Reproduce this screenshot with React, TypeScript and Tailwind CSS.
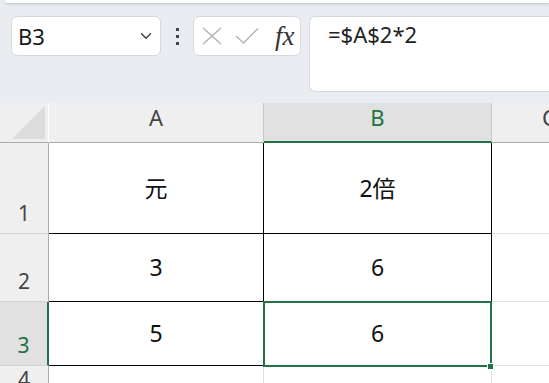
import React from 'react';
import { ChevronDown } from 'lucide-react';

const GREEN = '#217346';

// ── column header cell ──
function ColHeader({ label, active }: { label: string; active?: boolean }) {
  return (
    <div
      className={`flex items-start justify-center pt-[1px] text-[22px] leading-[26px] border-r border-r-[#c8c8c8] ${
        active ? 'bg-[#e1e1e1] text-[#217346] border-b-2 border-b-[#217346]' : 'bg-[#efefef] text-[#444] border-b border-b-[#ababab]'
      }`}
    >
      {label}
    </div>
  );
}

// ── row header cell ──
function RowHeader({ label, active }: { label: string; active?: boolean }) {
  return (
    <div
      className={`flex items-end justify-center pb-[6px] text-[21px] leading-[28px] border-b border-b-[#d4d4d4] ${
        active ? 'bg-[#e1e1e1] text-[#217346] border-r-2 border-r-[#217346]' : 'bg-[#efefef] text-[#444] border-r border-r-[#ababab]'
      }`}
    >
      {label}
    </div>
  );
}

function Cell({ value, last }: { value?: string; last?: boolean }) {
  return (
    <div
      className={`flex items-center justify-center text-[23px] text-[#111] border-b border-r ${
        last ? 'border-[#e1e1e1]' : 'border-black'
      }`}
    >
      {value}
    </div>
  );
}

export default function App() {
  const rows = [
    { n: '1', a: '元', b: '2倍' },
    { n: '2', a: '3', b: '6' },
    { n: '3', a: '5', b: '6' },
  ];

  return (
    <div
      className="w-[549px] h-[383px] overflow-hidden bg-[#e9ecf0] flex flex-col"
      style={{ fontFamily: '"Noto Sans", "Noto Sans CJK JP", sans-serif' }}
    >
      {/* ribbon edge */}
      <div className="shrink-0 h-[3px] ml-[5px] bg-white rounded-bl-[6px] shadow-[0_1px_3px_rgba(0,0,0,0.2)]" />

      {/* ── formula bar ── */}
      <div className="shrink-0 flex items-start h-[100px] pt-[13px] pl-[11px]">
        <div className="w-[150px] h-[40px] bg-white rounded-[6px] border border-[#d6d8dc] flex items-center justify-between pl-[6px] pr-[5px]">
          <span className="text-[22px] text-[#1a1a1a] leading-none">B3</span>
          <ChevronDown size={18} strokeWidth={1.6} className="text-[#333]" />
        </div>
        <div className="w-[32px] h-[40px] flex flex-col items-center justify-center gap-[4px]">
          <span className="w-[3px] h-[3px] bg-[#444]" />
          <span className="w-[3px] h-[3px] bg-[#444]" />
          <span className="w-[3px] h-[3px] bg-[#444]" />
        </div>
        <div className="w-[108px] h-[40px] bg-white rounded-[6px] border border-[#d6d8dc] flex items-center pl-[8px]">
          <svg width="20" height="18" viewBox="0 0 20 18" fill="none" stroke="#b4b4b4" strokeWidth="1.5">
            <path d="M1 1 L19 17 M19 1 L1 17" />
          </svg>
          <svg width="24" height="18" viewBox="0 0 24 18" fill="none" stroke="#b4b4b4" strokeWidth="1.5" className="ml-[13px]">
            <path d="M1 9 L8.5 16 L23 1.5" />
          </svg>
          <span
            className="ml-[16px] text-[27px] italic text-[#333] leading-none"
            style={{ fontFamily: '"Liberation Serif", serif' }}
          >
            fx
          </span>
        </div>
        <div className="ml-[8px] flex-1 h-[76px] bg-white rounded-l-[6px] border border-r-0 border-[#d6d8dc] pl-[18px] pt-[1px]">
          <span className="text-[22px] text-[#222]">=$A$2*2</span>
        </div>
      </div>

      {/* ── sheet grid ── */}
      <div className="relative flex-1 min-h-0 overflow-hidden grid grid-cols-[49px_215px_228px_1fr] grid-rows-[40px_91px_68px_64px_34px] bg-white">
        <div className="bg-[#efefef] border-r border-r-white border-b border-b-[#ababab] flex items-end pl-[12px] pb-[2px]">
          <svg width="34" height="34" viewBox="0 0 34 34">
            <polygon points="0,33 33,33 33,0" fill="#dcdcdc" />
          </svg>
        </div>
        <ColHeader label="A" />
        <ColHeader label="B" active />
        <div className="bg-[#efefef] border-b border-b-[#ababab] text-[22px] text-[#444] leading-[26px] pt-[1px] pl-[50px] whitespace-nowrap">
          C
        </div>

        {rows.map((r) => (
          <React.Fragment key={r.n}>
            <RowHeader label={r.n} active={r.n === '3'} />
            <Cell value={r.a} />
            <Cell value={r.b} />
            <Cell last />
          </React.Fragment>
        ))}

        <RowHeader label="4" />
        <div className="border-r border-[#e1e1e1]" />
        <div className="border-r border-[#e1e1e1]" />
        <div />

        {/* selection B3 */}
        <div className="absolute left-[263px] top-[198px] w-[229px] h-[66px] border-2 border-[#217346] pointer-events-none" />
        <div
          className="absolute left-[487px] top-[260px] w-[7px] h-[7px] border border-white"
          style={{ backgroundColor: GREEN }}
        />
      </div>
    </div>
  );
}
